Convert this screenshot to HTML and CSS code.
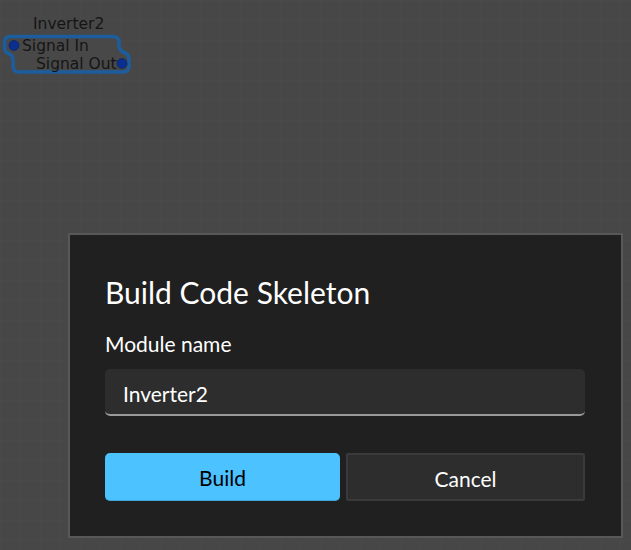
FILE: index.html
```html
<!DOCTYPE html>
<html>
<head>
<meta charset="utf-8">
<link rel="stylesheet" href="styles.css">
</head>
<body>
<div class="canvas">
  <svg class="node" width="140" height="80" viewBox="0 0 140 80">
    <text class="node-title" x="33" y="28.5">Inverter2</text>
    <path class="node-body" d="M10.5 36.5 H113 Q119 36.5 119 42.5 V45 Q119 51 124.5 52.5 Q129 54 129 60 V66 Q129 72 123 72 H19 Q13 72 13 66 V60 Q13 55 8.5 53.5 Q4.5 52 4.5 47 V42.5 Q4.5 36.5 10.5 36.5 Z"/>
    <circle class="port" cx="14" cy="45.5" r="5"/>
    <circle class="port" cx="122" cy="63.5" r="5"/>
    <text class="port-label" x="22" y="50.8">Signal In</text>
    <text class="port-label" x="36" y="68.5">Signal Out</text>
  </svg>

  <div class="dialog">
    <h1 class="dialog-title">Build Code Skeleton</h1>
    <label class="field-label">Module name</label>
    <div class="text-input">Inverter2</div>
    <div class="actions">
      <div class="btn btn-primary">Build</div>
      <div class="btn btn-secondary">Cancel</div>
    </div>
  </div>
</div>
</body>
</html>
```
FILE: styles.css
```css
html, body {
  margin: 0;
  padding: 0;
}
body {
  width: 631px;
  height: 550px;
  overflow: hidden;
  background-color: #474747;
  background-image:
    linear-gradient(rgba(255,255,255,0.01) 1px, transparent 1px),
    linear-gradient(90deg, rgba(255,255,255,0.01) 1px, transparent 1px);
  background-size: 20px 20px;
  font-family: "Lato", "Open Sans", sans-serif;
}
.canvas {
  position: relative;
  width: 631px;
  height: 550px;
}
.node {
  position: absolute;
  left: 0;
  top: 0;
}
.node-title {
  font-family: "DejaVu Sans", sans-serif;
  font-size: 15.5px;
  fill: #151515;
}
.node-body {
  fill: #484848;
  stroke: #1b5d9f;
  stroke-width: 3.5;
}
.port {
  fill: #0b2f8f;
  stroke: #08205f;
  stroke-width: 0.6;
}
.port-label {
  font-family: "DejaVu Sans", sans-serif;
  font-size: 15.5px;
  fill: #151515;
}
.dialog {
  position: absolute;
  left: 68px;
  top: 233px;
  width: 555px;
  height: 305px;
  box-sizing: border-box;
  border: 2px solid #585858;
  background: #202020;
  padding: 37px 36px 35px 35px;
  display: flex;
  flex-direction: column;
  color: #ffffff;
}
.dialog-title {
  margin: 0;
  font-size: 30px;
  font-weight: 400;
  line-height: 40px;
}
.field-label {
  margin-top: 18px;
  font-size: 21px;
  line-height: 28px;
}
.text-input {
  margin-top: 11px;
  height: 48px;
  box-sizing: border-box;
  background: #2d2d2d;
  border-radius: 5px;
  border-bottom: 2px solid #9a9a9a;
  padding: 3px 18px 0;
  display: flex;
  align-items: center;
  font-size: 21px;
}
.actions {
  margin-top: 37px;
  display: flex;
  gap: 6px;
}
.btn {
  flex: 1;
  height: 48px;
  box-sizing: border-box;
  display: flex;
  align-items: center;
  justify-content: center;
  font-size: 21px;
  padding-top: 2px;
}
.btn-primary {
  background: #4cc2ff;
  color: #000000;
  border-radius: 5px;
  border-bottom: 1px solid #3fa6dc;
}
.btn-secondary {
  background: #2d2d2d;
  color: #ffffff;
  border: 2px solid #3a3a3a;
  border-radius: 2px;
}
```
